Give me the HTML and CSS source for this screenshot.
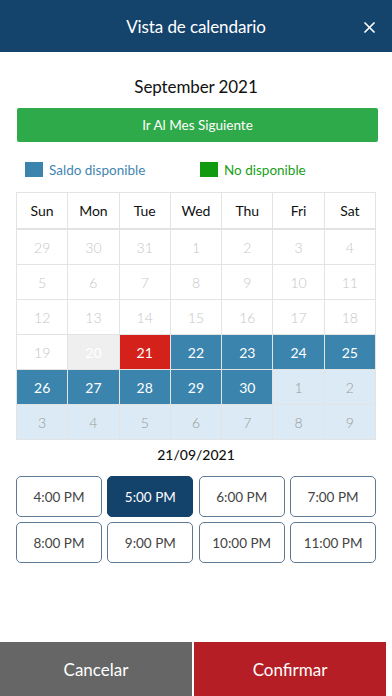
FILE: index.html
```html
<!DOCTYPE html>
<html>
<head>
<meta charset="utf-8">
<link rel="stylesheet" href="styles.css">
</head>
<body>
<div class="app">
  <header class="topbar">
    <div class="title">Vista de calendario</div>
    <svg class="close" width="11" height="11" viewBox="0 0 11 11"><path d="M1 1L10 10M10 1L1 10" stroke="#fff" stroke-width="1.7" stroke-linecap="round"/></svg>
  </header>
  <main class="content">
    <div class="month">September 2021</div>
    <button class="next">Ir Al Mes Siguiente</button>
    <div class="legend">
      <div class="leg leg-blue"><span class="sw sw-blue"></span>Saldo disponible</div>
      <div class="leg leg-green"><span class="sw sw-green"></span>No disponible</div>
    </div>
    <div class="cal">
      <div class="dow">Sun</div><div class="dow">Mon</div><div class="dow">Tue</div><div class="dow">Wed</div><div class="dow">Thu</div><div class="dow">Fri</div><div class="dow">Sat</div>
      <div class="d past">29</div><div class="d past">30</div><div class="d past">31</div><div class="d past">1</div><div class="d past">2</div><div class="d past">3</div><div class="d past">4</div>
      <div class="d past">5</div><div class="d past">6</div><div class="d past">7</div><div class="d past">8</div><div class="d past">9</div><div class="d past">10</div><div class="d past">11</div>
      <div class="d past">12</div><div class="d past">13</div><div class="d past">14</div><div class="d past">15</div><div class="d past">16</div><div class="d past">17</div><div class="d past">18</div>
      <div class="d past">19</div><div class="d today">20</div><div class="d sel">21</div><div class="d av">22</div><div class="d av">23</div><div class="d av">24</div><div class="d av">25</div>
      <div class="d av">26</div><div class="d av">27</div><div class="d av">28</div><div class="d av">29</div><div class="d av">30</div><div class="d nxt">1</div><div class="d nxt">2</div>
      <div class="d nxt">3</div><div class="d nxt">4</div><div class="d nxt">5</div><div class="d nxt">6</div><div class="d nxt">7</div><div class="d nxt">8</div><div class="d nxt">9</div>
    </div>
    <div class="date">21/09/2021</div>
    <div class="times">
      <button class="t">4:00 PM</button>
      <button class="t on">5:00 PM</button>
      <button class="t">6:00 PM</button>
      <button class="t">7:00 PM</button>
      <button class="t">8:00 PM</button>
      <button class="t">9:00 PM</button>
      <button class="t">10:00 PM</button>
      <button class="t">11:00 PM</button>
    </div>
  </main>
  <footer class="footer">
    <button class="fb cancel">Cancelar</button>
    <button class="fb confirm">Confirmar</button>
  </footer>
</div>
</body>
</html>
```
FILE: styles.css
```css
* { box-sizing: border-box; }
html, body { margin: 0; padding: 0; }
body {
  font-family: Lato, "Open Sans", sans-serif;
  background: #fff;
  color: #111;
}
.app {
  width: 392px;
  height: 696px;
  display: flex;
  flex-direction: column;
  overflow: hidden;
}
.topbar {
  height: 52px;
  background: #14436c;
  display: flex;
  align-items: center;
  justify-content: center;
  position: relative;
}
.title {
  color: #fff;
  font-size: 17px;
  letter-spacing: -0.1px;
}
.close {
  position: absolute;
  right: 17px;
  top: 22px;
}
.content {
  display: flex;
  flex-direction: column;
  padding: 0 16px;
}
.month {
  margin-top: 23px;
  text-align: center;
  font-size: 17px;
  line-height: 24px;
  letter-spacing: -0.1px;
  color: #111;
}
.next {
  margin: 9px -2px 0 1px;
  height: 34px;
  border: none;
  border-radius: 2px;
  background: #2faa4a;
  color: #fff;
  font-family: inherit;
  font-size: 13.5px;
}
.legend {
  display: flex;
  margin-top: 20px;
  padding-left: 9px;
  height: 15px;
  align-items: center;
}
.leg {
  display: flex;
  align-items: center;
  font-size: 13.5px;
  gap: 6px;
}
.leg-blue { color: #3f86b2; width: 175px; }
.leg-green { color: #18a018; }
.sw { width: 18px; height: 15px; display: inline-block; }
.sw-blue { background: #3b84ae; }
.sw-green { background: #0f9a0f; }
.cal {
  margin-top: 15px;
  display: grid;
  grid-template-columns: repeat(7, 1fr);
  grid-template-rows: 36px repeat(6, 34px);
  gap: 1px;
  background: #e3e3e3;
  border: 1px solid #e3e3e3;
}
.dow {
  background: #fff;
  display: flex;
  align-items: center;
  justify-content: center;
  font-size: 14px;
  color: #111;
  border-bottom: 1px solid #e3e3e3;
}
.d {
  display: flex;
  align-items: center;
  justify-content: center;
  font-size: 14px;
}
.past { background: #fff; color: #c6c6c6; font-weight: 300; }
.today { background: #efefef; color: #fff; }
.sel { background: #d4221b; color: #fff; }
.av { background: #3a84ad; color: #fff; }
.nxt { background: #dbeaf4; color: #9a9a9a; font-weight: 300; }
.date {
  margin-top: 6px;
  text-align: center;
  font-size: 14px;
  line-height: 18px;
  font-weight: 500;
  color: #111;
}
.times {
  margin-top: 12px;
  display: grid;
  grid-template-columns: repeat(4, 1fr);
  column-gap: 5.5px;
  row-gap: 5px;
}
.t {
  height: 41px;
  border: 1.5px solid #5d7995;
  border-radius: 5px;
  background: #fff;
  color: #444;
  font-family: inherit;
  font-size: 13.5px;
}
.t.on {
  background: #13426b;
  border-color: #13426b;
  color: #fff;
}
.footer {
  margin-top: auto;
  height: 54px;
  display: flex;
  gap: 2px;
  padding-right: 6px;
}
.fb {
  flex: 1;
  border: none;
  color: #fff;
  font-family: inherit;
  font-size: 17px;
}
.cancel { background: #666; }
.confirm { background: #b51e24; }
```
